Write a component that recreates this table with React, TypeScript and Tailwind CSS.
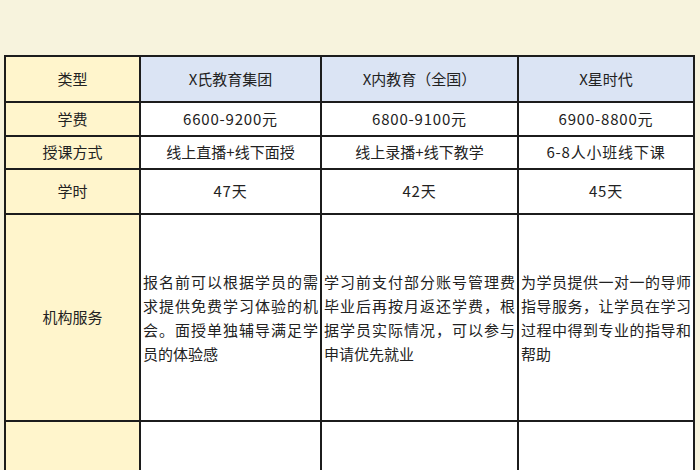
import React from "react";

interface Row {
  label: string;
  values: string[];
  height: string;
  long?: boolean;
}

const headers = ["X氏教育集团", "X内教育（全国）", "X星时代"];

const rows: Row[] = [
  { label: "学费", values: ["6600-9200元", "6800-9100元", "6900-8800元"], height: "h-[34px]" },
  { label: "授课方式", values: ["线上直播+线下面授", "线上录播+线下教学", "6-8人小班线下课"], height: "h-[33px]" },
  { label: "学时", values: ["47天", "42天", "45天"], height: "h-[45px]" },
  {
    label: "机构服务",
    values: [
      "报名前可以根据学员的需求提供免费学习体验的机会。面授单独辅导满足学员的体验感",
      "学习前支付部分账号管理费毕业后再按月返还学费，根据学员实际情况，可以参与申请优先就业",
      "为学员提供一对一的导师指导服务，让学员在学习过程中得到专业的指导和帮助",
    ],
    height: "h-[207px]",
    long: true,
  },
  { label: "", values: ["", "", ""], height: "h-[60px]" },
];

const cell = "border-r-2 border-b-2 border-[#1c1c1c]";

const App: React.FC = () => {
  return (
    <div
      className="w-[700px] h-[470px] overflow-hidden bg-[#f7f3dd] pt-[55px] pl-[4px] text-[15px] text-[#222]"
      style={{ fontFamily: '"Noto Sans CJK SC", "Noto Sans", sans-serif' }}
    >
      <div className="grid grid-cols-[135px_181px_197px_176px] w-[691px] border-l-2 border-t-2 border-[#1c1c1c]">
        {/* header row */}
        <div className={`${cell} h-[46px] bg-[#fff5cc] flex items-center justify-center`}>类型</div>
        {headers.map((h) => (
          <div key={h} className={`${cell} h-[46px] bg-[#dbe4f4] flex items-center justify-center`}>
            {h}
          </div>
        ))}

        {rows.map((row, i) => (
          <React.Fragment key={i}>
            <div className={`${cell} ${row.height} bg-[#fff5cc] flex items-center justify-center`}>
              {row.label}
            </div>
            {row.values.map((v, j) =>
              row.long ? (
                <div key={j} className={`${cell} ${row.height} bg-white flex items-center px-[2px]`}>
                  <p className="w-full text-justify leading-6">{v}</p>
                </div>
              ) : (
                <div
                  key={j}
                  className={`${cell} ${row.height} bg-white flex items-center justify-center ${
                    /\d/.test(v) ? "tracking-[0.8px]" : ""
                  }`}
                >
                  {v}
                </div>
              )
            )}
          </React.Fragment>
        ))}
      </div>
    </div>
  );
};

export default App;
